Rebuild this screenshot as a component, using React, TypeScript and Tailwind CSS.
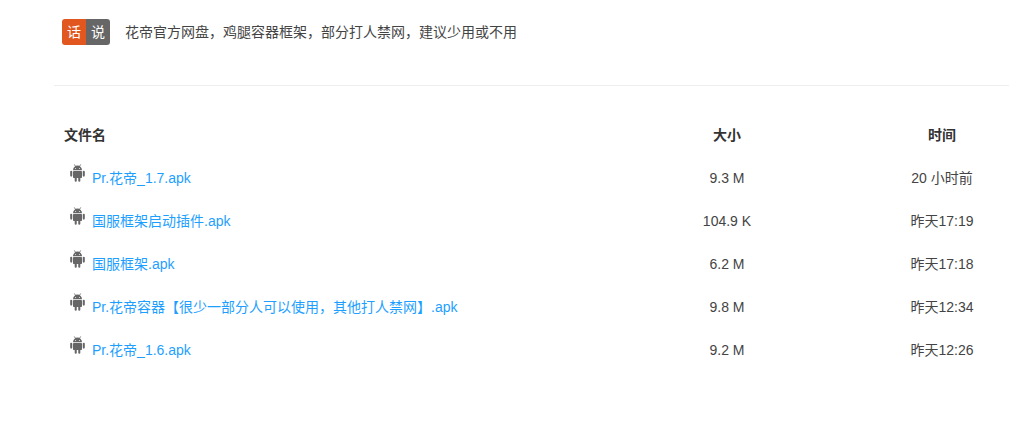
const rows = [
  ["Pr.花帝_1.7.apk", "9.3 M", "20 小时前"],
  ["国服框架启动插件.apk", "104.9 K", "昨天17:19"],
  ["国服框架.apk", "6.2 M", "昨天17:18"],
  ["Pr.花帝容器【很少一部分人可以使用，其他打人禁网】.apk", "9.8 M", "昨天12:34"],
  ["Pr.花帝_1.6.apk", "9.2 M", "昨天12:26"],
];

function Android() {
  return (
    <svg viewBox="0 0 16 18" preserveAspectRatio="none" className="w-[15px] h-[18px] text-[#666] mr-[7px] -mt-[12px] shrink-0" fill="currentColor">
      <path d="M3.2 6.2a4.8 4.6 0 0 1 9.6 0z" />
      <path d="M4.6 0.4 L6.2 3 M11.4 0.4 L9.8 3" stroke="currentColor" strokeWidth="0.8" />
      <rect x="3.2" y="6.9" width="9.6" height="7.2" rx="0.8" />
      <rect x="0.2" y="6.7" width="2.2" height="6" rx="1.1" />
      <rect x="13.6" y="6.7" width="2.2" height="6" rx="1.1" />
      <rect x="5" y="13.5" width="2.2" height="4.3" rx="1.1" />
      <rect x="8.8" y="13.5" width="2.2" height="4.3" rx="1.1" />
      <circle cx="6" cy="4.4" r="0.5" fill="#fff" />
      <circle cx="10" cy="4.4" r="0.5" fill="#fff" />
    </svg>
  );
}

export default function App() {
  return (
    <div className="w-[1009px] h-[426px] overflow-hidden bg-white text-[14px] text-[#444] font-['Liberation_Sans','Noto_Sans_CJK_SC',sans-serif]">
      <div className="pl-[62px] pt-[19px] h-[85px] flex items-start">
        <div className="flex h-[26px] w-[48px] rounded-[3px] overflow-hidden text-white leading-[26px] text-center">
          <span className="w-[24px] bg-[#e2561f]">话</span>
          <span className="w-[24px] bg-[#666666]">说</span>
        </div>
        <p className="ml-[15px] leading-[26px]">花帝官方网盘，鸡腿容器框架，部分打人禁网，建议少用或不用</p>
      </div>
      <div className="ml-[54px] h-px bg-[#eeeeee]" />
      <div className="ml-[54px] mt-[28px]">
        <div className="grid grid-cols-[526px_294px_136px] h-[43px] items-center font-bold text-[#333]">
          <div className="pl-[10px]">文件名</div>
          <div className="text-center">大小</div>
          <div className="text-center">时间</div>
        </div>
        {rows.map((r) => (
          <div key={r[0]} className="grid grid-cols-[526px_294px_136px] h-[43px] items-center">
            <div className="pl-[16px] flex items-center">
              <Android />
              <span className="text-[#1e9fff]">{r[0]}</span>
            </div>
            <div className="text-center">{r[1]}</div>
            <div className="text-center">{r[2]}</div>
          </div>
        ))}
      </div>
    </div>
  );
}
